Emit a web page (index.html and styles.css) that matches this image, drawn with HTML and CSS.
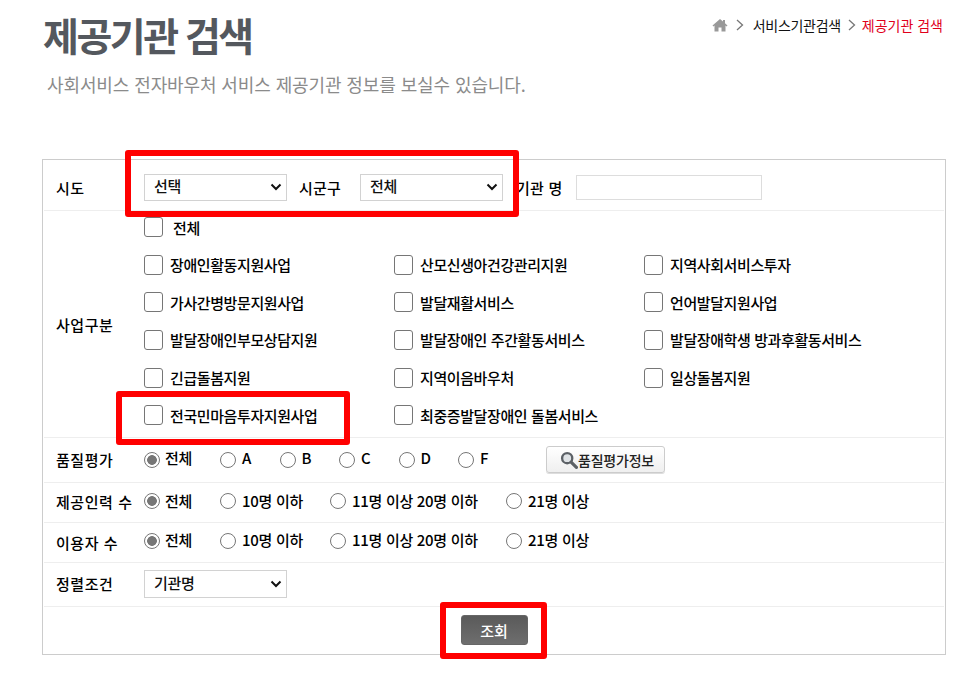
FILE: index.html
```html
<!DOCTYPE html>
<html lang="ko">
<head>
<meta charset="utf-8">
<title>제공기관 검색</title>
<link rel="stylesheet" href="styles.css">
</head>
<body>
<header class="head">
  <div class="head-text">
    <h1 class="title">제공기관 검색</h1>
    <p class="sub">사회서비스 전자바우처 서비스 제공기관 정보를 보실수 있습니다.</p>
  </div>
  <nav class="crumb">
    <svg class="home" width="16" height="14" viewBox="0 0 16 14"><path fill="#999" d="M8 1 0.5 7.5 1.4 8.5 2.5 7.6V13.500H6.500V9.500H9.500V13.500H13.500V7.600L14.600 8.500 15.500 7.500 13 5.300V2H11V3.600Z"/></svg>
    <svg class="sep" width="8" height="12" viewBox="0 0 8 12"><path fill="none" stroke="#777" stroke-width="1.3" d="M1 1l5.500 5-5.500 5"/></svg>
    <span class="crumb-link">서비스기관검색</span>
    <svg class="sep" width="8" height="12" viewBox="0 0 8 12"><path fill="none" stroke="#777" stroke-width="1.3" d="M1 1l5.500 5-5.500 5"/></svg>
    <span class="crumb-cur">제공기관 검색</span>
  </nav>
</header>

<form class="panel">
  <div class="row row-area">
    <div class="label">시도</div>
    <div class="fields">
      <select class="sel sel-a"><option>선택</option></select>
      <span class="inline-label">시군구</span>
      <select class="sel sel-a"><option>전체</option></select>
      <span class="inline-label name-label">기관 명</span>
      <input class="text" type="text">
    </div>
  </div>

  <div class="row row-biz">
    <div class="label">사업구분</div>
    <div class="checks">
      <label class="chk chk-all"><input type="checkbox"><span>전체</span></label>
      <div class="check-grid">
        <label class="chk"><input type="checkbox"><span>장애인활동지원사업</span></label>
        <label class="chk"><input type="checkbox"><span>산모신생아건강관리지원</span></label>
        <label class="chk"><input type="checkbox"><span>지역사회서비스투자</span></label>
        <label class="chk"><input type="checkbox"><span>가사간병방문지원사업</span></label>
        <label class="chk"><input type="checkbox"><span>발달재활서비스</span></label>
        <label class="chk"><input type="checkbox"><span>언어발달지원사업</span></label>
        <label class="chk"><input type="checkbox"><span>발달장애인부모상담지원</span></label>
        <label class="chk"><input type="checkbox"><span>발달장애인 주간활동서비스</span></label>
        <label class="chk"><input type="checkbox"><span>발달장애학생 방과후활동서비스</span></label>
        <label class="chk"><input type="checkbox"><span>긴급돌봄지원</span></label>
        <label class="chk"><input type="checkbox"><span>지역이음바우처</span></label>
        <label class="chk"><input type="checkbox"><span>일상돌봄지원</span></label>
        <label class="chk"><input type="checkbox"><span>전국민마음투자지원사업</span></label>
        <label class="chk"><input type="checkbox"><span>최중증발달장애인 돌봄서비스</span></label>
      </div>
    </div>
  </div>

  <div class="row row-grade">
    <div class="label">품질평가</div>
    <div class="fields radios grade">
      <label class="rad"><input type="radio" name="g" checked><span>전체</span></label>
      <label class="rad"><input type="radio" name="g"><span>A</span></label>
      <label class="rad"><input type="radio" name="g"><span>B</span></label>
      <label class="rad"><input type="radio" name="g"><span>C</span></label>
      <label class="rad"><input type="radio" name="g"><span>D</span></label>
      <label class="rad"><input type="radio" name="g"><span>F</span></label>
      <button class="info" type="button">
        <svg width="18" height="18" viewBox="0 0 17 17"><circle cx="6.800" cy="6.800" r="4.800" fill="#dfe3e6" stroke="#5c6166" stroke-width="2.200"/><path d="M10.500 10.500l5 5" stroke="#5c6166" stroke-width="3" stroke-linecap="round"/></svg>품질평가정보</button>
    </div>
  </div>

  <div class="row row-count">
    <div class="label">제공인력 수</div>
    <div class="fields radios count">
      <label class="rad"><input type="radio" name="s" checked><span>전체</span></label>
      <label class="rad"><input type="radio" name="s"><span>10명 이하</span></label>
      <label class="rad"><input type="radio" name="s"><span>11명 이상 20명 이하</span></label>
      <label class="rad"><input type="radio" name="s"><span>21명 이상</span></label>
    </div>
  </div>

  <div class="row row-count row-users">
    <div class="label">이용자 수</div>
    <div class="fields radios count">
      <label class="rad"><input type="radio" name="u" checked><span>전체</span></label>
      <label class="rad"><input type="radio" name="u"><span>10명 이하</span></label>
      <label class="rad"><input type="radio" name="u"><span>11명 이상 20명 이하</span></label>
      <label class="rad"><input type="radio" name="u"><span>21명 이상</span></label>
    </div>
  </div>

  <div class="row row-sort">
    <div class="label">정렬조건</div>
    <div class="fields">
      <select class="sel sel-a sel-sort"><option>기관명</option></select>
    </div>
  </div>

  <div class="submit-row">
    <button class="submit" type="button">조회</button>
  </div>

  <div class="mark mark-area"></div>
  <div class="mark mark-biz"></div>
  <div class="mark mark-submit"></div>
</form>
</body>
</html>
```
FILE: styles.css
```css
* { box-sizing: border-box; }
html, body { margin: 0; padding: 0; background: #fff; }
body {
  width: 964px;
  height: 676px;
  overflow: hidden;
  font-family: "Noto Sans CJK KR", "Noto Sans", sans-serif;
  font-size: 15px;
  color: #000;
}
.head {
  display: flex;
  justify-content: space-between;
  align-items: flex-start;
  height: 159px;
  padding: 0 21px 0 43px;
}
.title {
  margin: 8px 0 0;
  font-size: 39px;
  line-height: 52px;
  font-weight: 700;
  letter-spacing: -2.500px;
  color: #54585e;
}
.sub {
  margin: 11px 0 0 4px;
  font-size: 18px;
  line-height: 26px;
  letter-spacing: -0.110px;
  color: #8b8b8b;
}
.crumb {
  display: flex;
  align-items: center;
  height: 20px;
  margin-top: 15px;
  font-size: 14px;
}
.home { margin-right: 8px; }
.sep { margin-right: 9px; }
.crumb-link { color: #111; margin-right: 7px; letter-spacing: -0.300px; }
.crumb-cur { color: #e0001b; margin-left: -3px; }

.panel {
  position: relative;
  width: 904px;
  height: 496px;
  margin-left: 42px;
  padding: 0 1px;
  border: 1px solid #ccc;
}
.row {
  display: flex;
  align-items: center;
  border-bottom: 1px solid #eee;
}
.row-area { height: 51px; padding-top: 4px; }
.row-biz { height: 227px; }
.row-grade { height: 45px; padding-bottom: 1px; }
.row-count { height: 40px; padding-bottom: 3px; }
.row-sort { height: 44px; padding-bottom: 2px; }
.label {
  flex: none;
  width: 100px;
  padding-left: 12px;
  font-weight: 500;
  letter-spacing: 0.550px;
}
.row-users .label { position: relative; top: 1px; }
.row-users .fields { margin-top: -1px; }
.fields { display: flex; align-items: center; }

.sel {
  appearance: none;
  height: 27px;
  border: 1px solid #d2d2d2;
  border-radius: 0;
  background: #fff url("data:image/svg+xml,%3Csvg xmlns='http://www.w3.org/2000/svg' width='12' height='8' viewBox='0 0 12 8'%3E%3Cpath d='M1.500 1.500L6 6l4.500-4.500' fill='none' stroke='%23111' stroke-width='2'/%3E%3C/svg%3E") no-repeat right 4px center;
  padding: 0 0 3px 9px;
  font: inherit;
  font-weight: 500;
  letter-spacing: -0.300px;
  color: #111;
}
.sel-a { width: 143px; }
.sel-sort { height: 28px; }
.inline-label { margin: 0 19px 0 12px; font-weight: 500; letter-spacing: 0.200px; }
.name-label { margin: 0 14px 0 13px; }
.text {
  width: 186px;
  height: 25px;
  border: 1px solid #ddd;
  background: #fff;
}

.checks { align-self: flex-start; }
.chk {
  display: flex;
  align-items: center;
  height: 37.600px;
}
.chk-all { height: 34px; margin-top: -1px; }
.chk-all span { margin-left: 3px; }
.chk input {
  appearance: none;
  flex: none;
  width: 19px;
  height: 20px;
  margin: 0 7px 0 0;
  border: 1px solid #767676;
  border-radius: 3px;
  background: #fff;
}
.chk span { font-weight: 500; letter-spacing: -0.400px; }
.check-grid {
  display: grid;
  grid-template-columns: repeat(3, 250px);
  margin-top: 2px;
}

.radios { gap: 0; }
.rad { display: flex; align-items: center; }
.rad input {
  appearance: none;
  flex: none;
  width: 16px;
  height: 16px;
  margin: 0 6px 0 0;
  border: 1.400px solid #767676;
  border-radius: 50%;
  background: #fff;
}
.rad:first-child input { margin-right: 5px; }
.rad input:checked {
  background: radial-gradient(circle, #767676 0 4.500px, #fff 5.200px);
}
.rad span { font-weight: 500; letter-spacing: -0.300px; position: relative; top: -1px; }
.grade .rad span { top: -2px; }
.grade .rad { width: 59.500px; }
.grade .rad:first-child { width: 76px; }
.count .rad:nth-child(1) { width: 76px; }
.count .rad:nth-child(2) { width: 110px; }
.count .rad:nth-child(3) { width: 176px; }

.info {
  display: flex;
  align-items: center;
  justify-content: center;
  width: 119px;
  height: 27px;
  margin-left: 28px;
  padding: 0 0 0 4px;
  border: 1px solid #ccc;
  border-radius: 3px;
  background: linear-gradient(#fff, #efefef);
  box-shadow: 0 1px 0 #ddd;
  font: inherit;
  font-size: 14px;
  font-weight: 500;
  letter-spacing: -0.200px;
  color: #222;
}

.submit-row {
  display: flex;
  justify-content: center;
  align-items: flex-start;
  padding-top: 8px;
}
.submit {
  width: 67px;
  height: 30px;
  padding: 0;
  border: 1px solid #666;
  border-radius: 3px;
  background: linear-gradient(#5a5a5a, #6e6e6e);
  color: #fff;
  font: inherit;
  font-weight: 500;
}

.mark {
  position: absolute;
  border: 6px solid #f00;
  border-radius: 3px;
}
.mark-area { left: 82px; top: -10px; width: 394px; height: 67px; }
.mark-biz { left: 73px; top: 231px; width: 234px; height: 54px; }
.mark-submit { left: 397px; top: 442px; width: 107px; height: 57px; }
```
